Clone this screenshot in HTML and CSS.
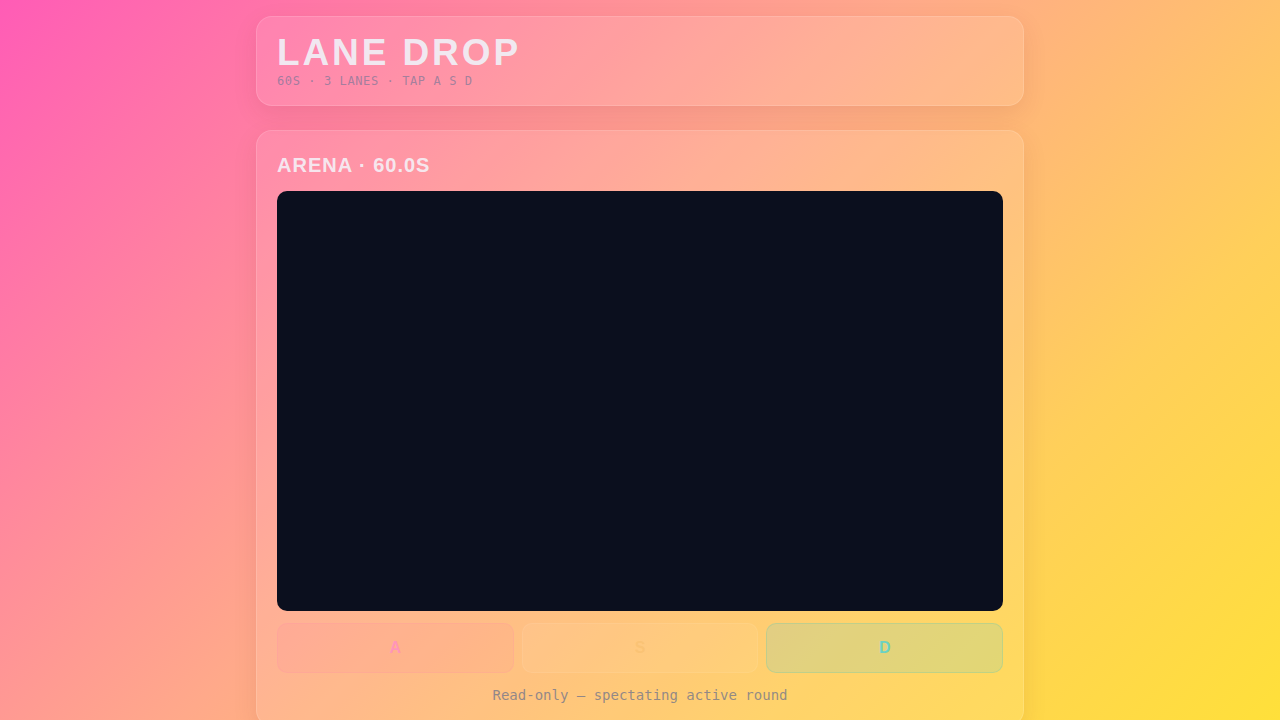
FILE: index.html
```html
<!DOCTYPE html>
<html lang="en">
<head>
<meta charset="utf-8">
<title>Lane Drop</title>
<link rel="stylesheet" href="styles.css">
</head>
<body>
<main class="app">
  <header class="card header">
    <h1 class="title">LANE DROP</h1>
    <p class="subtitle">60S · 3 LANES · TAP A S D</p>
  </header>
  <section class="card arena">
    <h2 class="arena-label">ARENA · 60.0S</h2>
    <div class="board"></div>
    <div class="lanes">
      <div class="lane lane-a">A</div>
      <div class="lane lane-s">S</div>
      <div class="lane lane-d">D</div>
    </div>
    <p class="note">Read-only — spectating active round</p>
  </section>
</main>
</body>
</html>
```

FILE: styles.css
```css
html, body {
  margin: 0;
  height: 100%;
}
body {
  background: linear-gradient(135deg, #ff5cb6 0%, #ffa98a 45%, #ffcf5a 75%, #ffe03a 100%);
  font-family: "Liberation Sans", Arial, sans-serif;
  overflow: hidden;
}
.app {
  width: 768px;
  margin: 0 auto;
  padding-top: 16px;
  display: flex;
  flex-direction: column;
  gap: 24px;
}
.card {
  background: rgba(255, 255, 255, 0.1);
  border: 1px solid rgba(255, 255, 255, 0.14);
  border-radius: 16px;
  box-shadow: 0 8px 24px rgba(120, 40, 40, 0.1);
}
.header {
  padding: 18px 20px 17px;
}
.title {
  margin: 0;
  font-size: 37px;
  line-height: 36px;
  font-weight: 700;
  letter-spacing: 2.9px;
  color: rgba(240, 241, 248, 0.93);
}
.subtitle {
  margin: 3px 0 0;
  font-family: "DejaVu Sans Mono", monospace;
  font-size: 12px;
  line-height: 14px;
  letter-spacing: 0.6px;
  color: rgba(105, 115, 150, 0.62);
}
.arena {
  padding: 22px 20px 20px;
}
.arena-label {
  margin: 0 0 14px;
  font-size: 20px;
  line-height: 24px;
  font-weight: 700;
  letter-spacing: 1px;
  color: rgba(245, 242, 248, 0.9);
}
.board {
  height: 420px;
  background: #0b0f1e;
  border-radius: 10px;
}
.lanes {
  margin-top: 12px;
  display: grid;
  grid-template-columns: repeat(3, 1fr);
  gap: 8px;
}
.lane {
  height: 48px;
  border-radius: 10px;
  display: flex;
  align-items: center;
  justify-content: center;
  font-size: 16px;
  font-weight: 700;
}
.lane-a {
  background: rgba(255, 120, 170, 0.1);
  border: 1px solid rgba(255, 130, 175, 0.16);
  color: rgba(255, 140, 200, 0.75);
}
.lane-s {
  background: rgba(255, 255, 255, 0.05);
  border: 1px solid rgba(255, 255, 255, 0.07);
  color: rgba(240, 180, 90, 0.3);
}
.lane-d {
  background: rgba(110, 210, 200, 0.2);
  border: 1px solid rgba(110, 200, 170, 0.3);
  color: rgba(100, 210, 200, 0.95);
}
.note {
  margin: 12px 0 0;
  text-align: center;
  font-family: "DejaVu Sans Mono", monospace;
  font-size: 14px;
  line-height: 20px;
  color: rgba(110, 115, 140, 0.75);
}
```
